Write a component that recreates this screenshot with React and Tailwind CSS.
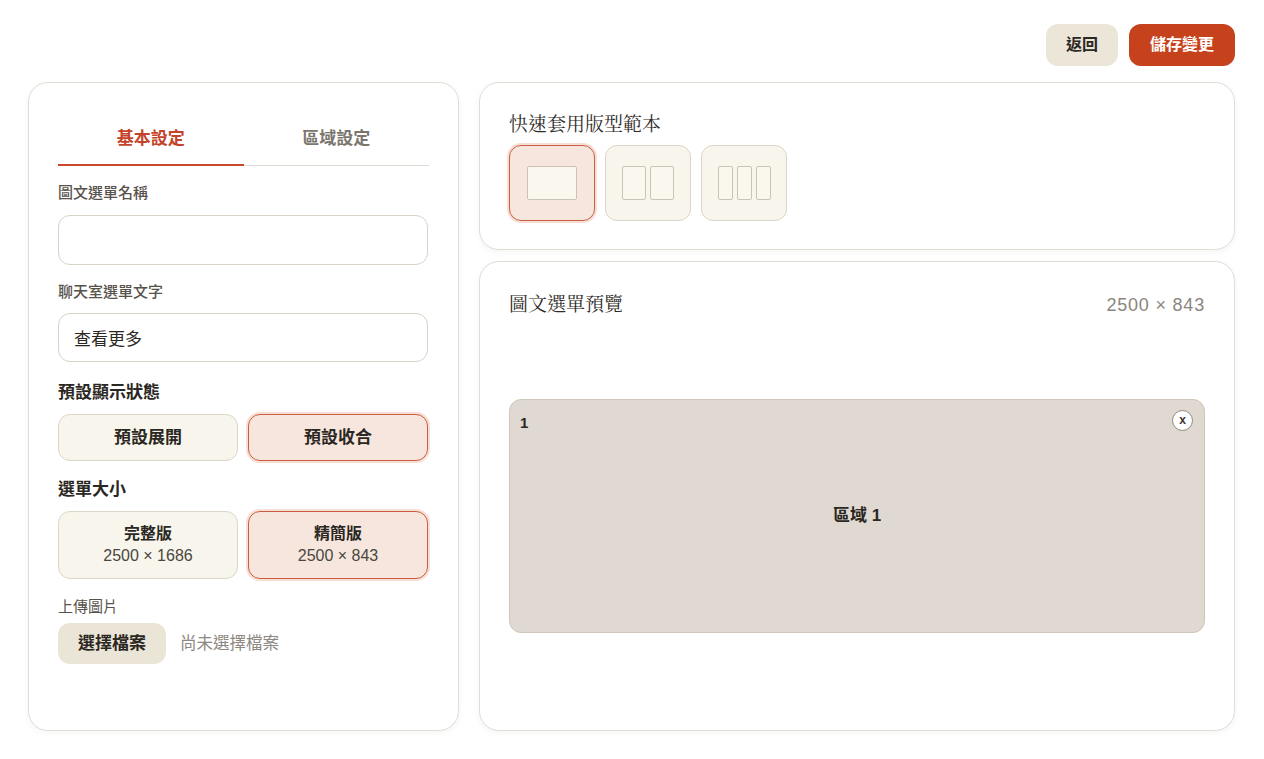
import React, { useState } from 'react'

const sans = "font-['Liberation_Sans','Noto_Sans_CJK_TC',sans-serif]"
const serif = "font-['Liberation_Serif','Noto_Serif_CJK_TC','Noto_Sans_CJK_TC',serif]"

const choiceBase = 'rounded-xl border text-[#2b2723] font-bold'
const choiceOn = 'bg-[#f7e6dd] border-[#c8603f] shadow-[0_0_0_2px_rgba(232,160,140,0.35)]'
const choiceOff = 'bg-[#f8f6ec] border-[#dcd6c8]'

// small layout thumbnails for the template picker
const LayoutThumb = ({ cols }) => {
  if (cols === 1) {
    return <div className="w-[50px] h-[34px] bg-[#faf7ef] border border-[#cbc3b6] rounded-[2px]" />
  }
  return (
    <div className="flex gap-[4px]">
      {Array.from({ length: cols }).map((_, i) => (
        <div
          key={i}
          className={`${cols === 2 ? 'w-[24px]' : 'w-[15px]'} h-[34px] bg-[#faf7ef] border border-[#cbc3b6] rounded-[2px]`}
        />
      ))}
    </div>
  )
}

const App = () => {
  const [tab, setTab] = useState('basic')
  const [state, setState] = useState('collapse')
  const [size, setSize] = useState('compact')
  const [layout, setLayout] = useState(1)

  return (
    <div className={`${sans} bg-white h-[759px] rounded-[18px] pl-[28px] pr-[29px] pt-[24px] pb-[28px] flex flex-col`}>
      {/* Top actions */}
      <div className="flex justify-end gap-[11px]">
        <button className="h-[42px] px-[20px] rounded-xl bg-[#ece6d9] text-[#2b2723] text-[16px] font-bold">返回</button>
        <button className="h-[42px] px-[21px] rounded-xl bg-[#c6421d] text-white text-[16px] font-bold">儲存變更</button>
      </div>

      <div className="flex gap-[20px] mt-[16px] flex-1 min-h-0">
        {/* Left settings card */}
        <div className="w-[431px] shrink-0 rounded-[20px] border border-[#e2ddd4] bg-white shadow-[0_2px_6px_rgba(60,50,30,0.05)] px-[29px] pt-[26px]">
          <div className="flex border-b border-[#dedad2]">
            <button
              onClick={() => setTab('basic')}
              className={`flex-1 h-[57px] pt-[5px] text-[17px] font-bold border-b-2 -mb-px ${tab === 'basic' ? 'text-[#c4432a] border-[#c84a2a]' : 'text-[#7b766e] border-transparent'}`}
            >
              基本設定
            </button>
            <button
              onClick={() => setTab('area')}
              className={`flex-1 h-[57px] pt-[5px] text-[17px] font-bold border-b-2 -mb-px ${tab === 'area' ? 'text-[#c4432a] border-[#c84a2a]' : 'text-[#7b766e] border-transparent'}`}
            >
              區域設定
            </button>
          </div>

          <label className="block mt-[17px] text-[15px] text-[#57524b] font-medium leading-[20px]">圖文選單名稱</label>
          <input className="mt-[12px] w-[370px] h-[50px] rounded-xl border border-[#d8d2c7] px-[15px] text-[17px] outline-none" />

          <label className="block mt-[17px] text-[15px] text-[#57524b] font-medium leading-[20px]">聊天室選單文字</label>
          <input
            defaultValue="查看更多"
            className="mt-[11px] w-[370px] h-[49px] rounded-xl border border-[#d8d2c7] px-[15px] text-[17px] text-[#2b2723] outline-none"
          />

          <div className="mt-[19px] text-[17px] font-bold text-[#2b2723] leading-[24px]">預設顯示狀態</div>
          <div className="mt-[9px] grid grid-cols-2 gap-[10px] w-[370px]">
            <button onClick={() => setState('expand')} className={`${choiceBase} h-[47px] text-[17px] ${state === 'expand' ? choiceOn : choiceOff}`}>預設展開</button>
            <button onClick={() => setState('collapse')} className={`${choiceBase} h-[47px] text-[17px] ${state === 'collapse' ? choiceOn : choiceOff}`}>預設收合</button>
          </div>

          <div className="mt-[17px] text-[17px] font-bold text-[#2b2723] leading-[24px]">選單大小</div>
          <div className="mt-[9px] grid grid-cols-2 gap-[10px] w-[370px]">
            <button onClick={() => setSize('full')} className={`${choiceBase} h-[68px] flex flex-col items-center justify-center ${size === 'full' ? choiceOn : choiceOff}`}>
              <span className="text-[16px] leading-[22px]">完整版</span>
              <span className="text-[16px] font-normal text-[#4a4640] leading-[22px]">2500 × 1686</span>
            </button>
            <button onClick={() => setSize('compact')} className={`${choiceBase} h-[68px] flex flex-col items-center justify-center ${size === 'compact' ? choiceOn : choiceOff}`}>
              <span className="text-[16px] leading-[22px]">精簡版</span>
              <span className="text-[16px] font-normal text-[#4a4640] leading-[22px]">2500 × 843</span>
            </button>
          </div>

          <div className="mt-[18px] text-[15px] text-[#57524b] leading-[20px]">上傳圖片</div>
          <div className="mt-[6px] flex items-center gap-[14px]">
            <button className="h-[41px] px-[20px] rounded-xl bg-[#ebe5d7] text-[17px] font-bold text-[#2b2723]">選擇檔案</button>
            <span className="text-[16.5px] text-[#8d8881]">尚未選擇檔案</span>
          </div>
        </div>

        {/* Right column */}
        <div className="flex-1 flex flex-col gap-[11px]">
          <div className="h-[168px] rounded-[20px] border border-[#e2ddd4] bg-white shadow-[0_2px_6px_rgba(60,50,30,0.05)] px-[29px] pt-[29px]">
            <div className={`${serif} text-[19px] text-[#2f2b27] leading-[26px]`}>快速套用版型範本</div>
            <div className="mt-[7px] flex gap-[10px]">
              {[1, 2, 3].map((n) => (
                <button
                  key={n}
                  onClick={() => setLayout(n)}
                  className={`w-[86px] h-[76px] rounded-xl border flex items-center justify-center ${layout === n ? choiceOn : choiceOff}`}
                >
                  <LayoutThumb cols={n} />
                </button>
              ))}
            </div>
          </div>

          <div className="flex-1 rounded-[20px] border border-[#e2ddd4] bg-white shadow-[0_2px_6px_rgba(60,50,30,0.05)] px-[29px] pt-[29px]">
            <div className="flex justify-between items-center h-[28px]">
              <span className={`${serif} text-[19px] text-[#2f2b27]`}>圖文選單預覽</span>
              <span className="text-[18px] tracking-[0.8px] text-[#8a857e]">2500 × 843</span>
            </div>

            {/* Preview canvas */}
            <div className="mt-[80px] relative h-[234px] rounded-xl bg-[#e0d9d1] border border-[#cfc6b9] flex items-center justify-center">
              <span className="absolute left-[10px] top-[12px] text-[15px] font-bold text-[#2b2723]">1</span>
              <button className="absolute right-[11px] top-[10px] w-[21px] h-[21px] rounded-full bg-white border border-[#8e8982] text-[12px] font-bold text-[#3a3631] flex items-center justify-center leading-none pb-[2px]">
                x
              </button>
              <span className="text-[17px] font-bold text-[#2b2723]">區域 1</span>
            </div>
          </div>
        </div>
      </div>
    </div>
  )
}

export default App
